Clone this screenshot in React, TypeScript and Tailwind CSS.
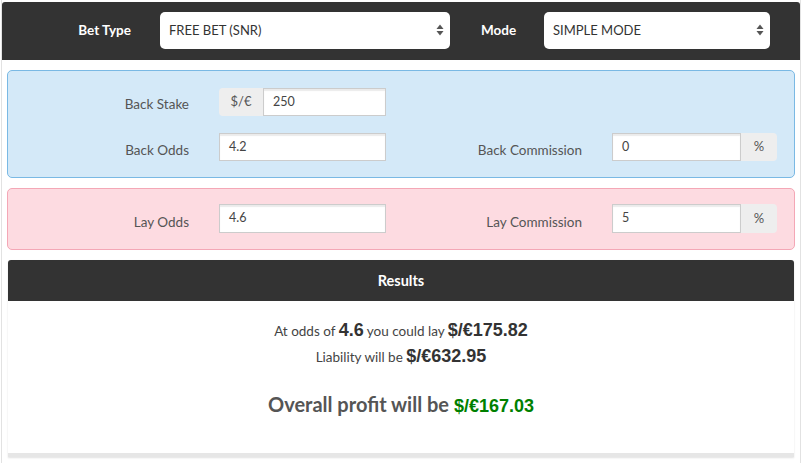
import React from "react";

const ui = { fontFamily: "Lato, 'Open Sans', sans-serif" };
const num = { fontFamily: "'Liberation Sans', Arial, sans-serif" };

function SelectArrows() {
  return (
    <svg width="8" height="12" viewBox="0 0 8 12" className="absolute right-[6px] top-1/2 -translate-y-1/2">
      <path d="M4 0.5 L7.5 5 L0.5 5 Z" fill="#555" />
      <path d="M4 11.5 L7.5 7 L0.5 7 Z" fill="#555" />
    </svg>
  );
}

function Select({ value, className }: { value: string; className: string }) {
  return (
    <div className={`relative h-[37px] bg-white rounded-[5px] flex items-center pl-[9px] pt-[1px] text-[13px] text-[#333] ${className}`}>
      {value}
      <SelectArrows />
    </div>
  );
}

function Input({ value, className = "" }: { value: string; className?: string }) {
  return (
    <div
      className={`h-[28px] bg-white border border-[#ccc] shadow-[inset_0_2px_1px_rgba(0,0,0,0.08)] flex items-center pl-[9px] text-[12.5px] text-[#444] ${className}`}
    >
      {value}
    </div>
  );
}

function Label({ children, pt = "pt-[6px]" }: { children: React.ReactNode; pt?: string }) {
  return <div className={`text-right pr-[15px] text-[13.5px] text-[#555] ${pt}`}>{children}</div>;
}

const cols = "grid grid-cols-[196px_197px_196px_197px] items-start";

export default function App() {
  return (
    <div style={ui} className="w-[803px] h-[463px] bg-white overflow-hidden">
      <div className="ml-[1px] w-[800px] h-[463px] border-x border-[#e2e2e2] pt-[2px]">
        {/* top bar */}
        <div className="h-[58px] bg-[#333] rounded-tl-[3px] rounded-tr-[3px] flex items-center pb-[2px]">
          <div className="w-[158px] text-right pr-[29px] text-white font-bold text-[13.5px]">Bet Type</div>
          <Select value="FREE BET (SNR)" className="w-[290px]" />
          <div className="w-[94px] pl-[31px] text-white font-bold text-[13.5px]">Mode</div>
          <Select value="SIMPLE MODE" className="w-[226px]" />
        </div>

        <div className="px-[5px] pt-[10px]">
          {/* blue panel */}
          <div className="h-[108px] bg-[#d4e9f8] border border-[#7ab9e4] rounded-[5px] pt-[17px]">
            <div className={cols}>
              <Label>Back Stake</Label>
              <div className="pl-[15px] pr-[15px] flex">
                <div className="h-[28px] w-[44px] bg-[#eee] rounded-l-[4px] flex items-center justify-center text-[13px] text-[#555]">
                  $/€
                </div>
                <Input value="250" className="flex-1" />
              </div>
              <div />
              <div />
            </div>
            <div className={`${cols} mt-[17px]`}>
              <Label pt="pt-[7px]">Back Odds</Label>
              <div className="pl-[15px] pr-[15px]">
                <Input value="4.2" />
              </div>
              <Label pt="pt-[7px]">Back Commission</Label>
              <div className="pl-[15px] pr-[17px] flex">
                <Input value="0" className="flex-1" />
                <div className="h-[28px] w-[36px] bg-[#eee] rounded-r-[4px] flex items-center justify-center text-[13px] text-[#555]">
                  %
                </div>
              </div>
            </div>
          </div>

          {/* pink panel */}
          <div className="mt-[10px] h-[62px] bg-[#fddbe1] border border-[#f4a7b6] rounded-[5px] pt-[15px]">
            <div className={cols}>
              <Label pt="pt-[8px]">Lay Odds</Label>
              <div className="pl-[15px] pr-[15px]">
                <Input value="4.6" className="h-[29px]" />
              </div>
              <Label pt="pt-[8px]">Lay Commission</Label>
              <div className="pl-[15px] pr-[17px] flex">
                <Input value="5" className="flex-1 h-[29px]" />
                <div className="h-[29px] w-[36px] bg-[#eee] rounded-r-[4px] flex items-center justify-center text-[13px] text-[#555]">
                  %
                </div>
              </div>
            </div>
          </div>

          {/* results */}
          <div className="mt-[10px] mx-[1px] shadow-[0_1px_2px_rgba(0,0,0,0.12)] border-b-[4px] border-[#e6e6e6] rounded-t-[3px]">
            <div className="h-[41px] bg-[#333] rounded-t-[3px] flex items-center justify-center text-white font-bold text-[14.5px]">
              Results
            </div>
            <div className="h-[152px] bg-white flex flex-col items-center pt-[16px] text-[#444]">
              <div className="h-[26px] flex items-baseline text-[13.5px]">
                <span>At odds of&nbsp;</span>
                <span style={num} className="font-bold text-[18px] text-[#333]">4.6</span>
                <span>&nbsp;you could lay&nbsp;</span>
                <span style={num} className="font-bold text-[18px] text-[#333]">$/€175.82</span>
              </div>
              <div className="h-[26px] flex items-baseline text-[13.5px]">
                <span>Liability will be&nbsp;</span>
                <span style={num} className="font-bold text-[18px] text-[#333]">$/€632.95</span>
              </div>
              <div className="mt-[20px] flex items-baseline">
                <span className="font-bold text-[20px] text-[#555]">Overall profit will be&nbsp;</span>
                <span style={num} className="font-bold text-[18px] text-[#008000]">$/€167.03</span>
              </div>
            </div>
          </div>
        </div>
      </div>
    </div>
  );
}
